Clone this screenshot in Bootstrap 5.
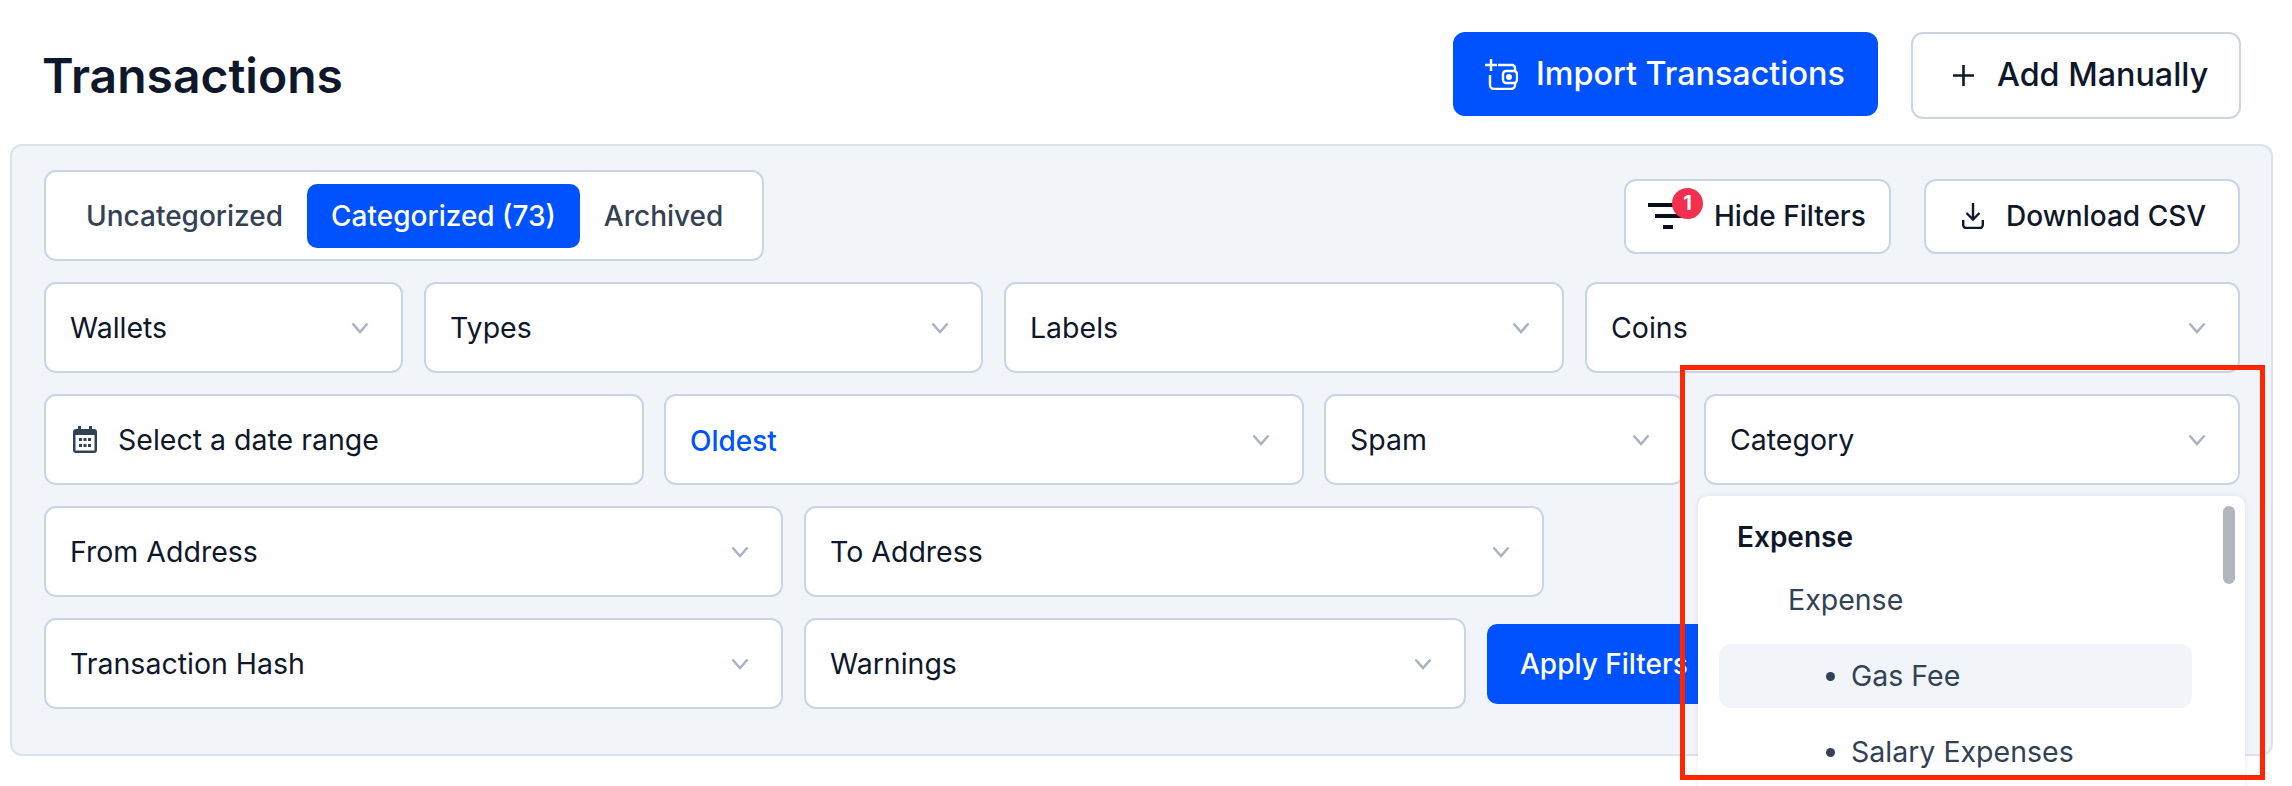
<!DOCTYPE html>
<html lang="en">
<head>
    <meta charset="UTF-8">
    <meta name="viewport" content="width=device-width, initial-scale=1.0">
    <link href="https://cdn.jsdelivr.net/npm/bootstrap@5.3.0/dist/css/bootstrap.min.css" rel="stylesheet">
    <title>Transactions</title>
    <style>
        html, body { height: 786px; overflow: hidden; }
        body {
            font-family: Inter, "Liberation Sans", sans-serif;
            color: #0f172a;
            background: #fff;
            position: relative;
        }
        .page-head { padding: 32px 51px 0 42px; height: 144px; }
        .page-title { font-size: 48px; font-weight: 600; line-height: 1; margin: 20px 0 0; color: #0f172a; }
        .head-btn { font-size: 32.3px; font-weight: 500; border-radius: 12px; line-height: 1; display: flex; align-items: center; white-space: nowrap; }
        .btn-import { height: 84px; width: 425px; padding: 0 0 0 32px; gap: 18px; background: #0052ff; border: 0; color: #fff; }
        .btn-manual { height: 87px; width: 330px; padding: 0 0 0 40px; gap: 23px; background: #fff; border: 2px solid #cbd5e1; color: #0f172a; }
        .filter-panel {
            margin: 0 19px 0 10px;
            height: 612px;
            padding: 25px 31px 0 32px;
            background: #f1f4f9;
            border: 2px solid #dbe2ec;
            border-radius: 12px;
        }
        .tab-box { width: 720px; height: 91px; margin-top: -1px; padding: 0 16px; background: #fff; border: 2px solid #cbd5e1; border-radius: 12px; flex-wrap: nowrap; align-items: center; }
        .tab-box .nav-link { height: 64px; padding: 0 24px; font-size: 28px; font-weight: 500; line-height: 64px; color: #334155; border-radius: 10px; white-space: nowrap; }
        .tab-box .nav-link.active { background: #0052ff; color: #fff; }
        .tool-btn { height: 75px; background: #fff; border: 2px solid #cbd5e1; border-radius: 12px; font-size: 28px; font-weight: 500; color: #0f172a; display: flex; align-items: center; padding: 0; line-height: 1; position: relative; }
        .btn-hide { width: 267px; padding-left: 22px; gap: 30px; }
        .btn-csv { width: 316px; padding-left: 36px; gap: 22px; }
        .filter-badge {
            position: absolute; left: 46px; top: 7px;
            width: 31px; height: 31px; border-radius: 50%;
            background: #f4304f; color: #fff;
            font-size: 20px; font-weight: 700;
            display: flex; align-items: center; justify-content: center;
        }
        .filter-row { display: grid; gap: 21px; margin-top: 21px; height: 91px; }
        .row-a { grid-template-columns: 359px 559px 560px 655px; }
        .row-b { gap: 20px; grid-template-columns: 600px 640px 360px 536px; }
        .row-c { grid-template-columns: 739px 740px; }
        .row-d { grid-template-columns: 739px 662px 300px; align-items: center; }
        .pick-box {
            height: 91px; background: #fff; border: 2px solid #cbd5e1; border-radius: 12px;
            font-size: 28.5px; line-height: 1; padding: 2px 32px 0 24px;
            display: flex; align-items: center; justify-content: space-between;
            position: relative; color: #0f172a;
        }
        .pick-box > svg { margin-top: -2px; }
        .pick-date { justify-content: flex-start; gap: 21px; padding-left: 27px; }
        .pick-blue { color: #0052ff; font-weight: 500; font-size: 28px; }
        .btn-apply { height: 80px; background: #0052ff; color: #fff; border: 0; border-radius: 10px; font-size: 28px; font-weight: 500; padding: 0 0 0 33px; text-align: left; line-height: 1; }
        .cat-menu {
            position: absolute; left: -8px; top: 100px; width: 547px; height: 300px;
            background: #fff; border-radius: 10px; padding: 0 53px 0 21px;
            box-shadow: 0 0 6px rgba(15, 23, 42, .08);
            color: #334155; overflow: hidden; z-index: 2;
        }
        .cat-group { font-weight: 600; color: #0f172a; height: 32px; line-height: 32px; margin: 25px 0 0 18px; font-size: 28px; }
        .cat-sub { height: 32px; line-height: 32px; margin: 31px 0 28px 69px; }
        .cat-item { height: 64px; border-radius: 12px; padding-left: 107px; line-height: 64px; margin-bottom: 12px; display: flex; align-items: center; }
        .cat-item::before { content: ""; width: 9px; height: 9px; border-radius: 50%; background: #334155; margin-right: 16px; }
        .cat-item.cat-hover { background: #f1f4f9; }
        .cat-thumb { position: absolute; right: 10px; top: 10px; width: 12px; height: 78px; border-radius: 6px; background: #b1b5bc; }
        .mark-box { position: absolute; left: 1680px; top: 365px; width: 585px; height: 415px; border: 5px solid #ff2600; z-index: 3; pointer-events: none; }
    </style>
</head>
<body>
    <div class="page-head d-flex justify-content-between align-items-start">
        <h1 class="page-title">Transactions</h1>
        <div class="d-flex align-items-start" style="gap:33px">
            <button class="btn head-btn btn-import">
                <svg width="33" height="31" viewBox="0 0 33 31" fill="none" stroke="#fff" stroke-width="2.4"><path d="M6 0v12M0 6h12"/><path d="M13 6h14a3 3 0 0 1 3 3v3M5 16v10a4 4 0 0 0 4 4h17a4 4 0 0 0 4-4v-3"/><rect x="18" y="12" width="14" height="12" rx="3"/><circle cx="24" cy="18" r="1.8" fill="#fff"/></svg>
                Import Transactions
            </button>
            <button class="btn head-btn btn-manual">
                <svg width="21" height="21" viewBox="0 0 21 21" fill="none" stroke="#0f172a" stroke-width="2.6"><path d="M10.5 0v21M0 10.5h21"/></svg>
                Add Manually
            </button>
        </div>
    </div>

    <div class="filter-panel">
        <div class="d-flex justify-content-between align-items-center">
            <ul class="nav nav-pills tab-box">
                <li class="nav-item"><a class="nav-link" href="#">Uncategorized</a></li>
                <li class="nav-item"><a class="nav-link active" href="#">Categorized (73)</a></li>
                <li class="nav-item"><a class="nav-link" href="#">Archived</a></li>
            </ul>
            <div class="d-flex" style="gap:33px">
                <button class="btn tool-btn btn-hide">
                    <svg width="36" height="26" viewBox="0 0 36 26" fill="#0b0f19"><rect x="0" y="0" width="36" height="4"/><rect x="7" y="11" width="29" height="4"/><rect x="15" y="22" width="10" height="4"/></svg>
                    <span class="filter-badge">1</span>
                    Hide Filters
                </button>
                <button class="btn tool-btn btn-csv">
                    <svg width="22" height="26" viewBox="0 0 22 26" fill="none" stroke="#0f172a" stroke-width="2.4"><path d="M11 0v16M4.5 10l6.500 6.500 6.500-6.500"/><path d="M1.200 17v5a3 3 0 0 0 3 3h13.600a3 3 0 0 0 3-3v-5"/></svg>
                    Download CSV
                </button>
            </div>
        </div>

        <div class="filter-row row-a">
            <div class="pick-box">Wallets <svg width="18" height="12" viewBox="0 0 18 12" fill="none" stroke="#a9b4c2" stroke-width="2.600"><path d="M1.500 1.500 9 10l7.500-8.500"/></svg></div>
            <div class="pick-box">Types <svg width="18" height="12" viewBox="0 0 18 12" fill="none" stroke="#a9b4c2" stroke-width="2.600"><path d="M1.500 1.500 9 10l7.500-8.500"/></svg></div>
            <div class="pick-box">Labels <svg width="18" height="12" viewBox="0 0 18 12" fill="none" stroke="#a9b4c2" stroke-width="2.600"><path d="M1.500 1.500 9 10l7.500-8.500"/></svg></div>
            <div class="pick-box">Coins <svg width="18" height="12" viewBox="0 0 18 12" fill="none" stroke="#a9b4c2" stroke-width="2.600"><path d="M1.500 1.500 9 10l7.500-8.500"/></svg></div>
        </div>

        <div class="filter-row row-b">
            <div class="pick-box pick-date">
                <svg width="24" height="27" viewBox="0 0 24 27"><path d="M5 0h3v3h8V0h3v3h2a3 3 0 0 1 3 3v18a3 3 0 0 1-3 3H3a3 3 0 0 1-3-3V6a3 3 0 0 1 3-3h2z" fill="#334155"/><rect x="2.500" y="9" width="19" height="15.500" fill="#fff"/><g fill="#334155"><rect x="6" y="12" width="3" height="3"/><rect x="10.500" y="12" width="3" height="3"/><rect x="15" y="12" width="3" height="3"/><rect x="6" y="18" width="3" height="3"/><rect x="10.500" y="18" width="3" height="3"/><rect x="15" y="18" width="3" height="3"/></g></svg>
                Select a date range
            </div>
            <div class="pick-box"><span class="pick-blue">Oldest</span> <svg width="18" height="12" viewBox="0 0 18 12" fill="none" stroke="#a9b4c2" stroke-width="2.600"><path d="M1.500 1.500 9 10l7.500-8.500"/></svg></div>
            <div class="pick-box">Spam <svg width="18" height="12" viewBox="0 0 18 12" fill="none" stroke="#a9b4c2" stroke-width="2.600"><path d="M1.500 1.500 9 10l7.500-8.500"/></svg></div>
            <div class="pick-box">Category <svg width="18" height="12" viewBox="0 0 18 12" fill="none" stroke="#a9b4c2" stroke-width="2.600"><path d="M1.500 1.500 9 10l7.500-8.500"/></svg>
                <div class="cat-menu">
                    <div class="cat-group">Expense</div>
                    <div class="cat-sub">Expense</div>
                    <div class="cat-item cat-hover">Gas Fee</div>
                    <div class="cat-item">Salary Expenses</div>
                    <div class="cat-thumb"></div>
                </div>
            </div>
        </div>

        <div class="filter-row row-c">
            <div class="pick-box">From Address <svg width="18" height="12" viewBox="0 0 18 12" fill="none" stroke="#a9b4c2" stroke-width="2.600"><path d="M1.500 1.500 9 10l7.500-8.500"/></svg></div>
            <div class="pick-box">To Address <svg width="18" height="12" viewBox="0 0 18 12" fill="none" stroke="#a9b4c2" stroke-width="2.600"><path d="M1.500 1.500 9 10l7.500-8.500"/></svg></div>
        </div>

        <div class="filter-row row-d">
            <div class="pick-box">Transaction Hash <svg width="18" height="12" viewBox="0 0 18 12" fill="none" stroke="#a9b4c2" stroke-width="2.600"><path d="M1.500 1.500 9 10l7.500-8.500"/></svg></div>
            <div class="pick-box">Warnings <svg width="18" height="12" viewBox="0 0 18 12" fill="none" stroke="#a9b4c2" stroke-width="2.600"><path d="M1.500 1.500 9 10l7.500-8.500"/></svg></div>
            <button class="btn btn-apply">Apply Filters</button>
        </div>
    </div>

    <div class="mark-box"></div>

    <script src="https://cdn.jsdelivr.net/npm/bootstrap@5.3.0/dist/js/bootstrap.bundle.min.js"></script>
</body>
</html>
